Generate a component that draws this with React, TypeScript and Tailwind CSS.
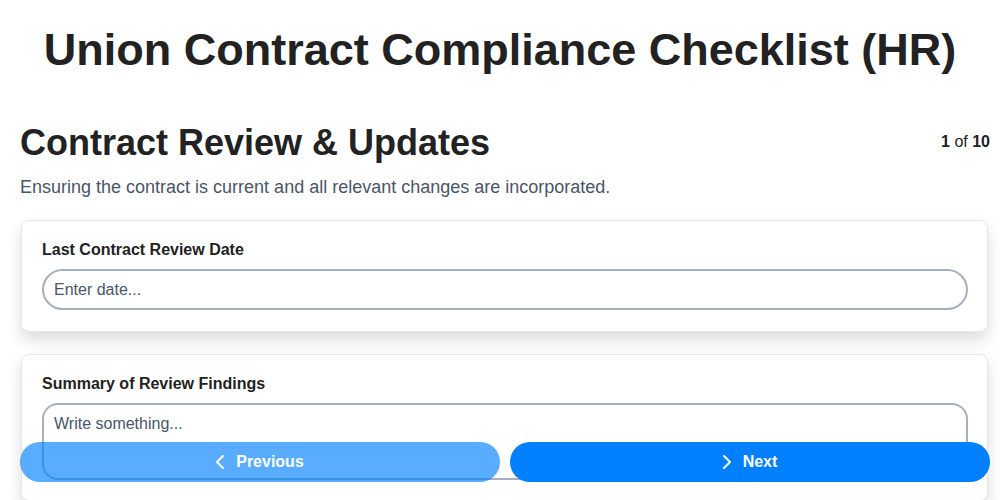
import React from 'react';
import { ChevronLeft, ChevronRight } from 'lucide-react';

const App: React.FC = () => {
  return (
    <div className="h-screen overflow-hidden bg-white text-[#222] font-['Liberation_Sans',Arial,sans-serif]">
      <h1 className="px-5 pt-[21px] text-center text-[45px] leading-[58px] font-bold">
        Union Contract Compliance Checklist (HR)
      </h1>

      <div className="pl-5 pr-[10px] pb-24">
        <div className="mt-[42px] flex items-start justify-between">
          <h2 className="text-[36px] leading-[44px] font-bold">Contract Review &amp; Updates</h2>
          <div className="pt-[11px] text-base leading-5">
            <span className="font-bold">1</span> of <span className="font-bold">10</span>
          </div>
        </div>
        <p className="mt-[10px] text-[18px] leading-6 text-[#4a5568]">
          Ensuring the contract is current and all relevant changes are incorporated.
        </p>

        <div className="mt-[21px] ml-px mr-[2px] rounded-lg border border-[#e5e7eb] bg-white pl-5 pr-[19px] pt-[19px] pb-[21px] shadow-[0_8px_16px_rgba(0,0,0,0.14)]">
          <label className="mb-[9px] block text-base leading-5 font-bold">Last Contract Review Date</label>
          <input
            type="text"
            placeholder="Enter date..."
            className="block h-[41px] w-full rounded-full border-2 border-[#a7b0ba] px-[10px] text-base text-[#222] outline-none placeholder:text-[#4a5568]"
          />
        </div>

        <div className="mt-[22px] ml-px mr-[2px] rounded-lg border border-[#e5e7eb] bg-white pl-5 pr-[19px] pt-[19px] pb-5 shadow-[0_8px_16px_rgba(0,0,0,0.14)]">
          <label className="mb-[9px] block text-base leading-5 font-bold">Summary of Review Findings</label>
          <textarea
            rows={3}
            placeholder="Write something..."
            className="block h-[77px] w-full resize-none rounded-2xl border-2 border-[#a7b0ba] px-[10px] py-[7px] text-base text-[#222] outline-none placeholder:text-[#4a5568]"
          />
        </div>
      </div>

      <div className="fixed bottom-[18px] left-5 right-[10px] flex gap-[10px]">
        <button className="flex h-10 flex-1 items-center justify-center gap-1 rounded-full bg-[#0080ff] pr-2 text-base font-bold text-white opacity-[0.65]">
          <ChevronLeft size={24} strokeWidth={2} />
          Previous
        </button>
        <button className="flex h-10 flex-1 items-center justify-center gap-1 rounded-full bg-[#0080ff] pr-2 text-base font-bold text-white">
          <ChevronRight size={24} strokeWidth={2} />
          Next
        </button>
      </div>
    </div>
  );
};

export default App;
